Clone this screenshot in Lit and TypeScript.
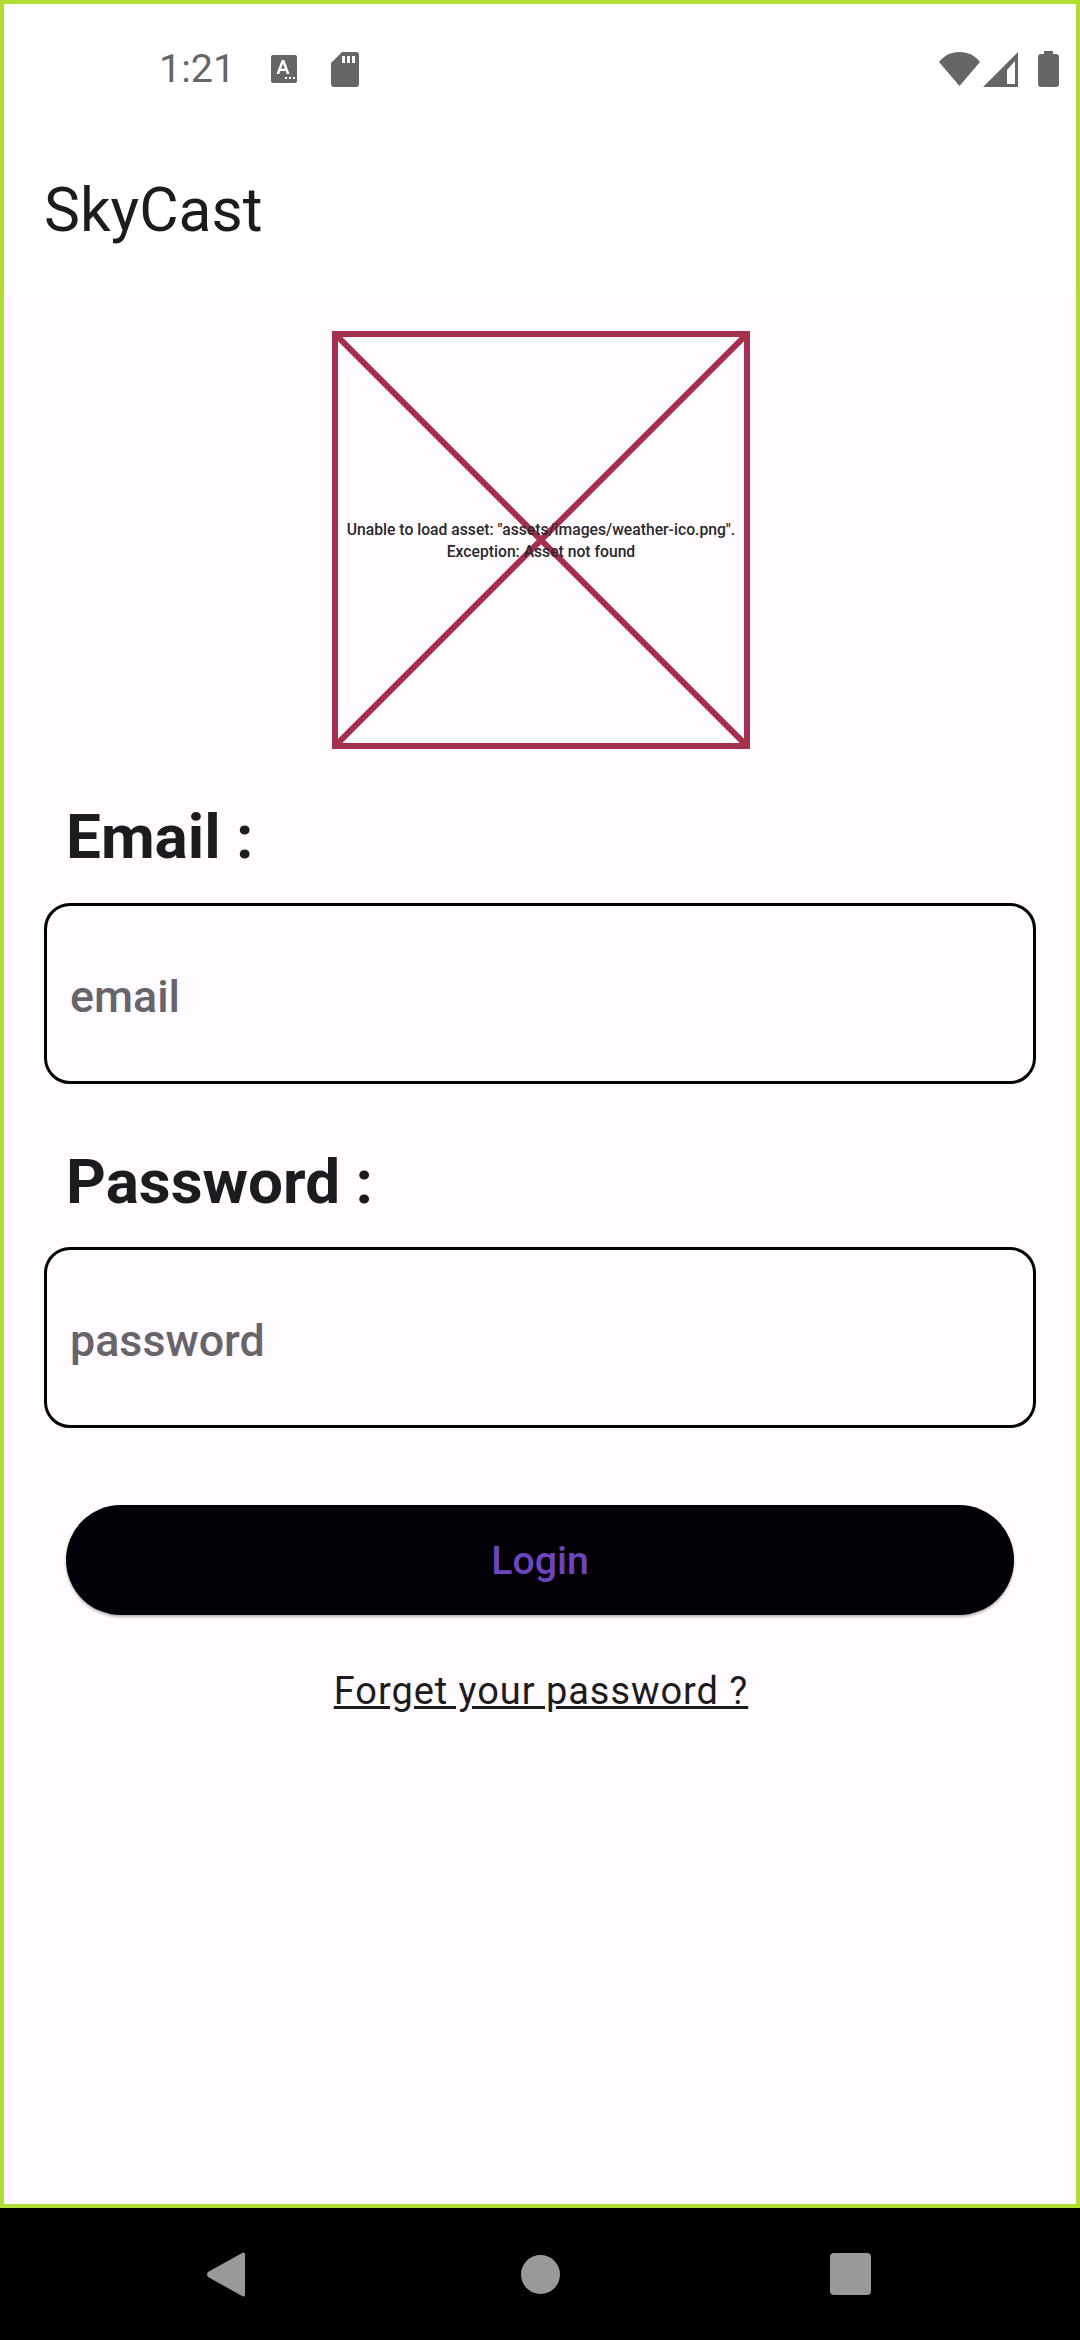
import {LitElement, css, html} from 'lit';
import {customElement} from 'lit/decorators.js';

@customElement('app-root')
export class AppRoot extends LitElement {
  static styles = css`
    :host {
      display: block;
      width: 1080px;
      height: 2340px;
      background: #000;
      font-family: Roboto, "Noto Sans", sans-serif;
      color: #1d1b20;
    }

    * {
      box-sizing: border-box;
    }

    .screen {
      display: flex;
      flex-direction: column;
      height: 2208px;
      border: 4px solid #b0dc34;
      background: #fffbfe;
    }

    .status {
      display: flex;
      align-items: center;
      height: 130px;
      padding-left: 155px;
      padding-right: 17px;
      background: #fff;
      color: #666;
    }

    .time {
      font-size: 39.5px;
      line-height: 44px;
      margin-right: 36px;
    }

    .status svg {
      display: block;
      fill: #666;
    }

    .sd {
      margin-left: 34px;
    }

    .spacer {
      flex: 1;
    }

    .signal {
      margin-left: 3px;
    }

    .battery {
      margin-left: 20px;
    }

    .appbar {
      display: flex;
      align-items: center;
      height: 156px;
      padding: 0 40px 2px;
      background: #fff;
      font-size: 60.5px;
      line-height: 70px;
    }

    .body {
      display: flex;
      flex-direction: column;
      flex: 1;
      padding-top: 41px;
    }

    .missing {
      position: relative;
      display: flex;
      align-items: center;
      justify-content: center;
      align-self: center;
      width: 418px;
      height: 418px;
      margin-left: 2px;
      border: 6px solid #a52f4e;
      color: #2a282d;
      font-size: 15.7px;
      font-weight: 500;
      line-height: 22px;
      text-align: center;
    }

    .missing svg {
      position: absolute;
      inset: 0;
      width: 100%;
      height: 100%;
    }

    .missing span {
      position: relative;
      top: 1px;
      white-space: nowrap;
    }

    .label {
      margin: 0;
      padding-left: 62px;
      font-size: 62px;
      font-weight: 700;
      line-height: 70px;
    }

    .email-label {
      margin-top: 53px;
    }

    .password-label {
      margin-top: 63px;
    }

    .field {
      display: flex;
      align-items: center;
      height: 181px;
      margin: 31px 40px 0;
      padding: 6px 23px 0;
      border: 3px solid #000;
      border-radius: 26px;
      font-size: 44.8px;
      font-weight: 460;
      color: #67646b;
    }

    .password-label + .field {
      margin-top: 30px;
    }

    .login {
      display: flex;
      align-items: center;
      justify-content: center;
      height: 110px;
      margin: 77px 62px 0;
      padding-top: 2px;
      border-radius: 55px;
      background: #040008;
      box-shadow: 0 2px 3px rgba(0, 0, 0, 0.3);
      font-size: 39.300px;
      font-weight: 500;
      color: #6c45bf;
    }

    .forgot {
      align-self: center;
      margin-top: 53px;
      margin-left: 2px;
      font-size: 38px;
      line-height: 46px;
      letter-spacing: 0.950px;
      text-decoration: underline;
    }

    .nav {
      display: grid;
      grid-template-columns: 207px 38px 276px 39px 270px 41px;
      align-items: center;
      height: 132px;
    }

    .nav svg {
      display: block;
      fill: #999;
    }

    .nav .slot-2 {
      grid-column: 4;
    }

    .nav .slot-3 {
      grid-column: 6;
    }

    .nav .slot-1 {
      grid-column: 2;
    }
  `;

  render() {
    return html`
      <div class="screen">
        <div class="status">
          <span class="time">1:21</span>
          <svg width="26" height="28" viewBox="0 0 26 28">
            <path fill-rule="evenodd" d="M2 0h22a2 2 0 0 1 2 2v24a2 2 0 0 1-2 2H2a2 2 0 0 1-2-2V2a2 2 0 0 1 2-2zM10.700 5 5.500 19h2.800l1-3h5.400l1 3h2.800L13.300 5zM12 8.500l1.800 5.200h-3.600zM14 22h2v2h-2zM18 22h2v2h-2zM22 22h2v2h-2z"/>
          </svg>
          <svg class="sd" width="28" height="35" viewBox="0 0 28 35">
            <path fill-rule="evenodd" d="M11 0h14a3 3 0 0 1 3 3v29a3 3 0 0 1-3 3H3a3 3 0 0 1-3-3V11zM11 4v7h3V4zM16 4v7h3V4zM21 4v7h3V4z"/>
          </svg>
          <span class="spacer"></span>
          <svg width="41" height="34" viewBox="0 0 41 34">
            <path d="M20.500 34 0 10C5 3.500 12 0 20.500 0S36 3.500 41 10z"/>
          </svg>
          <svg class="signal" width="35" height="35" viewBox="0 0 35 35">
            <path fill-rule="evenodd" d="M35 0v35H0zM32 9l-8 9v14h8z"/>
          </svg>
          <svg class="battery" width="21" height="36" viewBox="0 0 21 36">
            <path d="M6 0h9v3h3a3 3 0 0 1 3 3v27a3 3 0 0 1-3 3H3a3 3 0 0 1-3-3V6a3 3 0 0 1 3-3h3z"/>
          </svg>
        </div>
        <div class="appbar">SkyCast</div>
        <div class="body">
          <div class="missing">
            <svg viewBox="0 0 406 406" preserveAspectRatio="none">
              <path d="M0 0 406 406M406 0 0 406" stroke="#a52f4e" stroke-width="6" fill="none"/>
            </svg>
            <span>Unable to load asset: "assets/images/weather-ico.png".<br>Exception: Asset not found</span>
          </div>
          <h2 class="label email-label">Email :</h2>
          <div class="field">email</div>
          <h2 class="label password-label">Password :</h2>
          <div class="field">password</div>
          <div class="login">Login</div>
          <div class="forgot">Forget your password ?</div>
        </div>
      </div>
      <div class="nav">
        <svg class="slot-1" width="38" height="45" viewBox="0 0 38 45">
          <path d="M36 0.500a2 2 0 0 1 2 1.500v41a2 2 0 0 1-2 1.500L1 25a4 4 0 0 1 0-5z"/>
        </svg>
        <svg class="slot-2" width="39" height="39" viewBox="0 0 39 39">
          <circle cx="19.500" cy="19.500" r="19.500"/>
        </svg>
        <svg class="slot-3" width="41" height="42" viewBox="0 0 41 42">
          <rect width="41" height="42" rx="4"/>
        </svg>
      </div>
    `;
  }
}
